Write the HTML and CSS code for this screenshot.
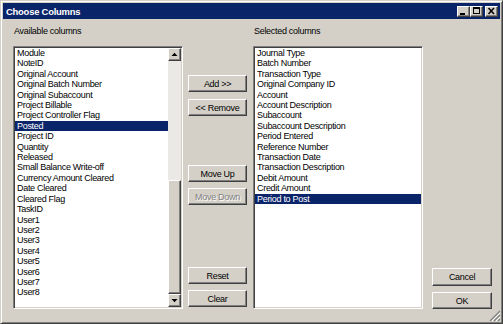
FILE: index.html
```html
<!DOCTYPE html>
<html lang="en">
<head>
    <meta charset="UTF-8">
    <title>Choose Columns</title>
    <link rel="stylesheet" href="styles.css">
</head>
<body>
    <div class="window">
        <div class="titlebar">
            <span class="title">Choose Columns</span>
            <div class="caption-buttons">
                <span class="cap-btn">
                    <svg width="11" height="9" viewBox="0 0 11 9" shape-rendering="crispEdges"><rect x="2" y="6" width="5" height="2" fill="#000"/></svg>
                </span>
                <span class="cap-btn">
                    <svg width="11" height="9" viewBox="0 0 11 9" shape-rendering="crispEdges">
                        <rect x="2" y="0" width="7" height="2" fill="#000"/>
                        <rect x="2" y="0" width="1" height="7" fill="#000"/>
                        <rect x="8" y="0" width="1" height="7" fill="#000"/>
                        <rect x="2" y="6" width="7" height="1" fill="#000"/>
                    </svg>
                </span>
                <span class="cap-btn close">
                    <svg width="11" height="9" viewBox="0 0 11 9">
                        <path d="M2.5 1 L8 7 M8 1 L2.5 7" stroke="#000" stroke-width="1.6" fill="none"/>
                    </svg>
                </span>
            </div>
        </div>

        <div class="content">
            <!-- Available columns -->
            <div class="pane">
                <div class="label">Available columns</div>
                <div class="listbox">
                    <ul class="items">
                        <li>Module</li>
                        <li>NoteID</li>
                        <li>Original Account</li>
                        <li>Original Batch Number</li>
                        <li>Original Subaccount</li>
                        <li>Project Billable</li>
                        <li>Project Controller Flag</li>
                        <li class="selected">Posted</li>
                        <li>Project ID</li>
                        <li>Quantity</li>
                        <li>Released</li>
                        <li>Small Balance Write-off</li>
                        <li>Currency Amount Cleared</li>
                        <li>Date Cleared</li>
                        <li>Cleared Flag</li>
                        <li>TaskID</li>
                        <li>User1</li>
                        <li>User2</li>
                        <li>User3</li>
                        <li>User4</li>
                        <li>User5</li>
                        <li>User6</li>
                        <li>User7</li>
                        <li>User8</li>
                    </ul>
                    <div class="scrollbar">
                        <span class="sb-btn">
                            <svg width="11" height="11" viewBox="0 0 11 11"><polygon points="2.5,7 8.5,7 5.5,3.8" fill="#000"/></svg>
                        </span>
                        <div class="sb-track">
                            <span class="sb-thumb"></span>
                        </div>
                        <span class="sb-btn">
                            <svg width="11" height="11" viewBox="0 0 11 11"><polygon points="2.5,4 8.5,4 5.5,7.2" fill="#000"/></svg>
                        </span>
                    </div>
                </div>
            </div>

            <!-- Move buttons -->
            <div class="mid-buttons">
                <button class="btn btn-add">Add &gt;&gt;</button>
                <button class="btn btn-remove">&lt;&lt; Remove</button>
                <button class="btn btn-up">Move Up</button>
                <button class="btn btn-down" disabled>Move Down</button>
                <button class="btn btn-reset">Reset</button>
                <button class="btn btn-clear">Clear</button>
            </div>

            <!-- Selected columns -->
            <div class="pane">
                <div class="label">Selected columns</div>
                <div class="listbox">
                    <ul class="items">
                        <li>Journal Type</li>
                        <li>Batch Number</li>
                        <li>Transaction Type</li>
                        <li>Original Company ID</li>
                        <li>Account</li>
                        <li>Account Description</li>
                        <li>Subaccount</li>
                        <li>Subaccount Description</li>
                        <li>Period Entered</li>
                        <li>Reference Number</li>
                        <li>Transaction Date</li>
                        <li>Transaction Description</li>
                        <li>Debit Amount</li>
                        <li>Credit Amount</li>
                        <li class="selected">Period to Post</li>
                    </ul>
                </div>
            </div>

            <div class="side-buttons">
                <button class="btn btn-wide btn-cancel">Cancel</button>
                <button class="btn btn-wide btn-ok">OK</button>
            </div>
        </div>

        <svg class="grip" width="12" height="12" viewBox="0 0 12 12">
            <path d="M11 1 L1 11 M11 5 L5 11 M11 9 L9 11" stroke="#808080" stroke-width="1.2"/>
            <path d="M11 3 L3 11 M11 7 L7 11" stroke="#fff" stroke-width="1"/>
        </svg>
    </div>
</body>
</html>
```

FILE: styles.css
```css
body {
    margin: 0;
    background: #d4d0c8;
    font-family: 'Liberation Sans', Arial, sans-serif;
    font-size: 9px;
    letter-spacing: -0.3px;
    color: #000;
}

.window {
    position: relative;
    width: 503px;
    height: 324px;
    box-sizing: border-box;
    padding: 2px;
    background: #d4d0c8;
    border: 1px solid;
    border-color: #d4d0c8 #404040 #404040 #d4d0c8;
    box-shadow: inset 1px 1px #fff, inset -1px -1px #808080;
}

/* ===== Title bar ===== */
.titlebar {
    height: 16px;
    background: #0a246a;
    display: flex;
    align-items: center;
    justify-content: space-between;
    padding: 0 2px;
}

.title {
    color: #fff;
    font-weight: bold;
    font-size: 9.4px;
    letter-spacing: -0.2px;
    padding-left: 1px;
}

.caption-buttons {
    display: flex;
}

.cap-btn {
    width: 13px;
    height: 11px;
    box-sizing: border-box;
    background: #d4d0c8;
    border: 1px solid;
    border-color: #fff #404040 #404040 #fff;
    box-shadow: inset -1px -1px #808080;
    display: flex;
}

.cap-btn.close {
    margin-left: 2px;
}

/* ===== Body ===== */
.content {
    display: flex;
    align-items: flex-start;
    padding: 7px 0 0 10px;
}

.pane {
    width: 170px;
}

.label {
    line-height: 11px;
    margin-bottom: 9px;
    padding-left: 1px;
}

.listbox {
    height: 263px;
    box-sizing: border-box;
    background: #fff;
    border: 1px solid;
    border-color: #808080 #fff #fff #808080;
    box-shadow: inset 1px 1px #404040, inset -1px -1px #d4d0c8;
    padding: 1px;
    display: flex;
}

.items {
    flex: 1;
    list-style: none;
    margin: 0;
    padding: 0;
    overflow: hidden;
}

.items li {
    line-height: 10.4px;
    padding-left: 2px;
    white-space: nowrap;
}

.items li.selected {
    background: #0a246a;
    color: #fff;
}

/* ===== Scrollbar ===== */
.scrollbar {
    width: 13px;
    display: flex;
    flex-direction: column;
}

.sb-btn,
.sb-thumb {
    display: block;
    box-sizing: border-box;
    background: #d4d0c8;
    border: 1px solid;
    border-color: #fff #404040 #404040 #fff;
    box-shadow: inset -1px -1px #808080;
}

.sb-btn {
    height: 13px;
}

.sb-btn svg {
    display: block;
}

.sb-track {
    flex: 1;
    background: #ebe9e5;
    display: flex;
    flex-direction: column;
    justify-content: flex-end;
}

.sb-thumb {
    height: 114px;
}

/* ===== Buttons ===== */
.btn {
    display: block;
    width: 59px;
    height: 17px;
    box-sizing: border-box;
    padding: 0;
    background: #d4d0c8;
    border: 1px solid;
    border-color: #fff #404040 #404040 #fff;
    box-shadow: inset -1px -1px #808080;
    font-family: inherit;
    font-size: 9px;
    letter-spacing: -0.3px;
    color: #000;
    text-align: center;
}

.btn:disabled {
    color: #808080;
    text-shadow: 1px 1px #fff;
}

.mid-buttons {
    margin: 20px 6px 0 5px;
}

.btn-add { margin-top: 29px; }
.btn-remove { margin-top: 7px; }
.btn-up { margin-top: 49px; }
.btn-down { margin-top: 6px; }
.btn-reset { margin-top: 62px; }
.btn-clear { margin-top: 6px; }

.side-buttons {
    margin-left: 9px;
}

.btn-wide {
    width: 60px;
}

.btn-cancel { margin-top: 242px; height: 18px; }
.btn-ok { margin-top: 6px; }

.grip {
    position: absolute;
    right: 1px;
    bottom: 1px;
}
```
